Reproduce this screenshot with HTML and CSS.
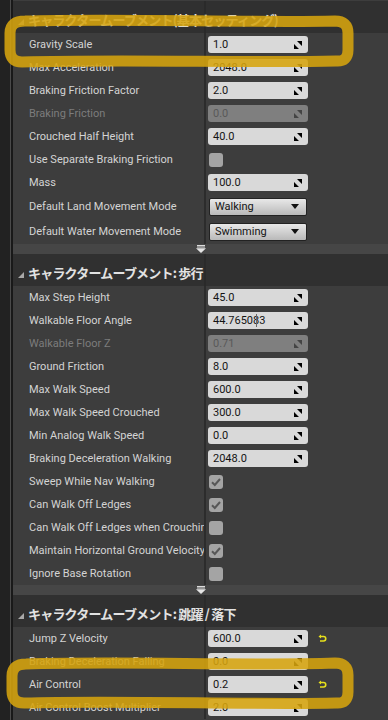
FILE: index.html
```html
<!DOCTYPE html>
<html lang="ja">
<head>
  <meta charset="UTF-8">
  <meta name="viewport" content="width=device-width, initial-scale=1.0">
  <title>Character Movement</title>
  <link rel="stylesheet" href="styles.css">
</head>
<body>
  <div class="editor">
    <div class="gutter"></div>
    <div class="panel">
      <div class="stub"></div>

      <!-- 基本セッティング -->
      <div class="cat-head"><span class="caret"></span><span class="cat-title">キャラクタームーブメント(基本セッティング)</span></div>
      <div class="row"><div class="label">Gravity Scale</div><div class="value"><div class="num">1.0<svg class="drag" viewBox="0 0 8 8"><path d="M3 0H8V5Z M0 3V8H5Z"/></svg></div></div></div>
      <div class="row"><div class="label">Max Acceleration</div><div class="value"><div class="num">2048.0<svg class="drag" viewBox="0 0 8 8"><path d="M3 0H8V5Z M0 3V8H5Z"/></svg></div></div></div>
      <div class="row"><div class="label">Braking Friction Factor</div><div class="value"><div class="num">2.0<svg class="drag" viewBox="0 0 8 8"><path d="M3 0H8V5Z M0 3V8H5Z"/></svg></div></div></div>
      <div class="row off"><div class="label">Braking Friction</div><div class="value"><div class="num">0.0<svg class="drag" viewBox="0 0 8 8"><path d="M3 0H8V5Z M0 3V8H5Z"/></svg></div></div></div>
      <div class="row"><div class="label">Crouched Half Height</div><div class="value"><div class="num">40.0<svg class="drag" viewBox="0 0 8 8"><path d="M3 0H8V5Z M0 3V8H5Z"/></svg></div></div></div>
      <div class="row"><div class="label">Use Separate Braking Friction</div><div class="value"><div class="check"></div></div></div>
      <div class="row"><div class="label">Mass</div><div class="value"><div class="num">100.0<svg class="drag" viewBox="0 0 8 8"><path d="M3 0H8V5Z M0 3V8H5Z"/></svg></div></div></div>
      <div class="row tall"><div class="label">Default Land Movement Mode</div><div class="value"><div class="select">Walking<svg class="down" viewBox="0 0 8 5"><path d="M0 0H8L4 5Z"/></svg></div></div></div>
      <div class="row tall"><div class="label">Default Water Movement Mode</div><div class="value"><div class="select">Swimming<svg class="down" viewBox="0 0 8 5"><path d="M0 0H8L4 5Z"/></svg></div></div></div>
      <div class="expander"><svg class="more" viewBox="0 0 10 8"><path d="M1 0.5H9M1 2H9" stroke="#dcdcdc" stroke-width="1"/><path d="M0 3.2H10L5 8Z"/></svg></div>

      <!-- 歩行 -->
      <div class="cat-head"><span class="caret"></span><span class="cat-title">キャラクタームーブメント: 歩行</span></div>
      <div class="row"><div class="label">Max Step Height</div><div class="value"><div class="num">45.0<svg class="drag" viewBox="0 0 8 8"><path d="M3 0H8V5Z M0 3V8H5Z"/></svg></div></div></div>
      <div class="row"><div class="label">Walkable Floor Angle</div><div class="value"><div class="num">44.765083<span class="ibeam"></span><svg class="drag" viewBox="0 0 8 8"><path d="M3 0H8V5Z M0 3V8H5Z"/></svg></div></div></div>
      <div class="row off"><div class="label">Walkable Floor Z</div><div class="value"><div class="num">0.71<svg class="drag" viewBox="0 0 8 8"><path d="M3 0H8V5Z M0 3V8H5Z"/></svg></div></div></div>
      <div class="row"><div class="label">Ground Friction</div><div class="value"><div class="num">8.0<svg class="drag" viewBox="0 0 8 8"><path d="M3 0H8V5Z M0 3V8H5Z"/></svg></div></div></div>
      <div class="row"><div class="label">Max Walk Speed</div><div class="value"><div class="num">600.0<svg class="drag" viewBox="0 0 8 8"><path d="M3 0H8V5Z M0 3V8H5Z"/></svg></div></div></div>
      <div class="row"><div class="label">Max Walk Speed Crouched</div><div class="value"><div class="num">300.0<svg class="drag" viewBox="0 0 8 8"><path d="M3 0H8V5Z M0 3V8H5Z"/></svg></div></div></div>
      <div class="row"><div class="label">Min Analog Walk Speed</div><div class="value"><div class="num">0.0<svg class="drag" viewBox="0 0 8 8"><path d="M3 0H8V5Z M0 3V8H5Z"/></svg></div></div></div>
      <div class="row"><div class="label">Braking Deceleration Walking</div><div class="value"><div class="num">2048.0<svg class="drag" viewBox="0 0 8 8"><path d="M3 0H8V5Z M0 3V8H5Z"/></svg></div></div></div>
      <div class="row"><div class="label">Sweep While Nav Walking</div><div class="value"><div class="check"><svg viewBox="0 0 14 14"><path d="M3 7.2L5.8 10L11 4" stroke="#575757" stroke-width="2" fill="none"/></svg></div></div></div>
      <div class="row"><div class="label">Can Walk Off Ledges</div><div class="value"><div class="check"><svg viewBox="0 0 14 14"><path d="M3 7.2L5.8 10L11 4" stroke="#575757" stroke-width="2" fill="none"/></svg></div></div></div>
      <div class="row"><div class="label">Can Walk Off Ledges when Crouching</div><div class="value"><div class="check"></div></div></div>
      <div class="row"><div class="label">Maintain Horizontal Ground Velocity</div><div class="value"><div class="check"><svg viewBox="0 0 14 14"><path d="M3 7.2L5.8 10L11 4" stroke="#575757" stroke-width="2" fill="none"/></svg></div></div></div>
      <div class="row"><div class="label">Ignore Base Rotation</div><div class="value"><div class="check"></div></div></div>
      <div class="expander"><svg class="more" viewBox="0 0 10 8"><path d="M1 0.5H9M1 2H9" stroke="#dcdcdc" stroke-width="1"/><path d="M0 3.2H10L5 8Z"/></svg></div>

      <!-- 跳躍 / 落下 -->
      <div class="cat-head"><span class="caret"></span><span class="cat-title">キャラクタームーブメント: 跳躍 / 落下</span></div>
      <div class="row"><div class="label">Jump Z Velocity</div><div class="value"><div class="num">600.0<svg class="drag" viewBox="0 0 8 8"><path d="M3 0H8V5Z M0 3V8H5Z"/></svg></div><svg class="reset" viewBox="0 0 9 9"><path d="M2.5 2.5H5.5A2.2 2.2 0 0 1 5.5 7H2" stroke="#e6e01c" stroke-width="1.6" fill="none"/><path d="M0.5 2.5L3 0.5V4.5Z" fill="#e6e01c"/></svg></div></div>
      <div class="row"><div class="label">Braking Deceleration Falling</div><div class="value"><div class="num">0.0<svg class="drag" viewBox="0 0 8 8"><path d="M3 0H8V5Z M0 3V8H5Z"/></svg></div></div></div>
      <div class="row"><div class="label">Air Control</div><div class="value"><div class="num">0.2<svg class="drag" viewBox="0 0 8 8"><path d="M3 0H8V5Z M0 3V8H5Z"/></svg></div><svg class="reset" viewBox="0 0 9 9"><path d="M2.5 2.5H5.5A2.2 2.2 0 0 1 5.5 7H2" stroke="#e6e01c" stroke-width="1.6" fill="none"/><path d="M0.5 2.5L3 0.5V4.5Z" fill="#e6e01c"/></svg></div></div>
      <div class="row"><div class="label">Air Control Boost Multiplier</div><div class="value"><div class="num">2.0<svg class="drag" viewBox="0 0 8 8"><path d="M3 0H8V5Z M0 3V8H5Z"/></svg></div></div></div>
    </div>

    <!-- hand drawn highlight marks -->
    <svg class="marker" viewBox="0 0 388 720">
      <path d="M25 21C120 18 250 23 335 21Q348 21 348 33L348 50Q348 62 336 61C250 63 120 59 22 62Q10 62 10 50L10 33Q10 21 25 21Z"/>
      <path d="M26 664C120 661 250 666 335 663Q348 663 348 675L348 692Q348 704 336 703C250 705 120 700 24 703Q12 703 12 691L12 676Q12 664 26 664Z"/>
    </svg>
  </div>
</body>
</html>
```

FILE: styles.css
```css
body {
  margin: 0;
  background: #1f1f1f;
  font-family: Roboto, "Noto Sans", sans-serif;
}

.editor {
  position: relative;
  display: flex;
  height: 720px;
  overflow: hidden;
}

.gutter {
  width: 10px;
  background: #222;
  border-right: 1px solid #4a4a4a;
}

.panel {
  flex: 1;
  background: #3d3d3d;
  border-left: 2px solid #191919;
}

.stub {
  height: 1px;
}

.cat-head {
  height: 27px;
  padding-top: 5px;
  display: flex;
  align-items: center;
  background:
    linear-gradient(to right, transparent 191px, #2a2a2a 191px, #2a2a2a 193px, transparent 193px),
    #303030;
  white-space: nowrap;
}

.caret {
  width: 0;
  height: 0;
  margin: 4px 4px 0 5px;
  border-left: 6px solid transparent;
  border-bottom: 6px solid #a8a8a8;
}

.cat-title {
  font-family: "Noto Sans CJK JP", sans-serif;
  font-weight: 700;
  font-size: 13px;
  letter-spacing: -0.8px;
  color: #e2e2e2;
}

.row {
  display: grid;
  grid-template-columns: 191px 1fr;
  height: 23px;
}

.row.tall {
  height: 25px;
}

.label {
  padding-left: 16px;
  display: flex;
  align-items: center;
  font-size: 11px;
  color: #d4d4d4;
  white-space: nowrap;
  overflow: hidden;
}

.row.off .label {
  color: #7c7c7c;
}

.value {
  border-left: 2px solid #2c2c2c;
  padding-left: 2px;
  display: flex;
  align-items: center;
  gap: 10px;
}

.num {
  position: relative;
  width: 100px;
  height: 17px;
  box-sizing: border-box;
  padding: 0 6px 0 5px;
  border-radius: 3px;
  background: #d9d9d9;
  color: #141414;
  font-size: 11px;
  display: flex;
  align-items: center;
  justify-content: space-between;
}

.row.off .num {
  background: #7f7f7f;
  color: #595959;
}

.drag {
  width: 8px;
  height: 8px;
  fill: #000;
}

.row.off .drag {
  fill: #444;
}

.ibeam {
  position: absolute;
  left: 48px;
  top: 2px;
  width: 1px;
  height: 13px;
  background: #6a6a6a;
}

.check {
  width: 14px;
  height: 14px;
  margin-left: 1px;
  border-radius: 3px;
  background: #a4a4a4;
}

.check svg {
  display: block;
  width: 14px;
  height: 14px;
}

.select {
  width: 98px;
  height: 18px;
  box-sizing: border-box;
  margin-left: 1px;
  padding: 0 7px 0 5px;
  border: 1px solid #222;
  border-radius: 2px;
  background: linear-gradient(#e8e8e8, #b9b9b9);
  color: #141414;
  font-size: 11px;
  display: flex;
  align-items: center;
  justify-content: space-between;
}

.down {
  width: 8px;
  height: 5px;
  fill: #111;
}

.reset {
  width: 9px;
  height: 9px;
}

.expander {
  height: 10px;
  background: #464646;
  display: flex;
  justify-content: center;
  align-items: center;
}

.more {
  width: 10px;
  height: 8px;
  fill: #e4e4e4;
}

.marker {
  position: absolute;
  left: 0;
  top: 0;
  width: 388px;
  height: 720px;
  pointer-events: none;
  fill: none;
  stroke: rgba(214, 164, 14, 0.88);
  stroke-width: 11;
  stroke-linecap: round;
}
```
